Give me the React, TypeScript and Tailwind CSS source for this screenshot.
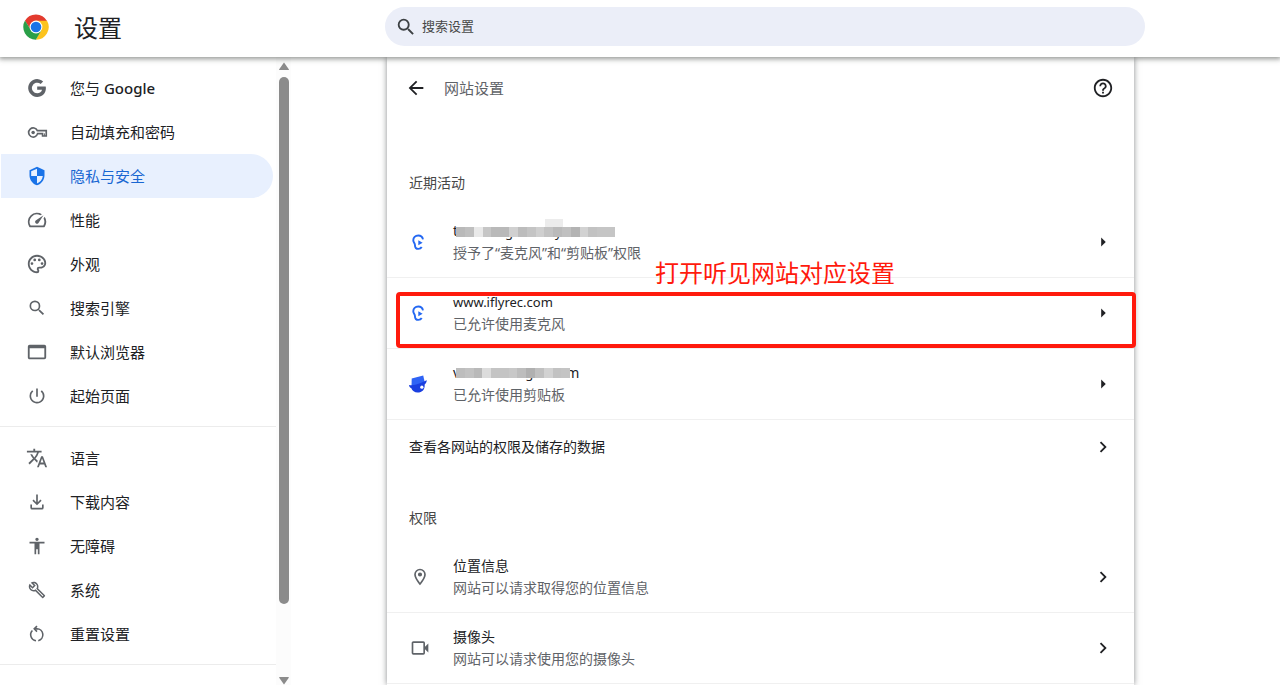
import type { ReactNode } from "react";
import {
    MdArrowBack,
    MdArrowRight,
    MdChevronRight,
    MdHelpOutline,
    MdSearch,
    MdAccessibility,
} from "react-icons/md";

type IconProps = { className?: string };

function Glyph({ d, className, viewBox = "0 0 24 24" }: IconProps & { d: string; viewBox?: string }) {
    return (
        <svg viewBox={viewBox} className={className ?? "h-5 w-5"} fill="currentColor" aria-hidden="true">
            <path fillRule="evenodd" d={d} />
        </svg>
    );
}

function ChromeLogo() {
    return (
        <svg viewBox="0 0 48 48" className="h-[26px] w-[26px]" aria-hidden="true">
            <circle cx="24" cy="24" r="23" fill="#fff" />
            <path fill="#e33b2e" d="M24 13h20.3A23.5 23.5 0 0 0 3.6 12.3L14.5 29.5 24 13z" />
            <path fill="#fcc31e" d="M33.5 29.5L23.6 47.5A23.5 23.5 0 0 0 44.4 12.5H24l9.5 17z" />
            <path fill="#2a9f48" d="M14.5 29.5L3.7 12.1a23.5 23.5 0 0 0 20 35.4L34 29.8 24 35z" />
            <circle cx="24" cy="24" r="11.8" fill="#fff" />
            <circle cx="24" cy="24" r="9.8" fill="#1a73e8" />
        </svg>
    );
}

function KeyIcon() {
    return (
        <svg viewBox="0 0 24 24" className="h-[21px] w-[21px]" fill="none" stroke="currentColor" strokeWidth="1.900" aria-hidden="true">
            <path d="M11.800 9.800H22V16h-4.200v-2.700h-5.700A5.200 5.200 0 1 1 11.800 9.800z" />
            <circle cx="7" cy="12" r="2" fill="currentColor" stroke="none" />
            <path d="M20 13v3" strokeWidth="1" />
        </svg>
    );
}

function ResetIcon() {
    return (
        <svg viewBox="0 0 24 24" className="h-5 w-5" fill="none" stroke="currentColor" strokeWidth="1.900" aria-hidden="true">
            <path d="M10.800 20A7.200 7.200 0 0 1 6.500 7.800" />
            <path d="M13.500 20a7.200 7.200 0 0 0-1.500-14.200H9.500" />
            <path d="M12 2.500L8.700 5.800 12 9.100" />
        </svg>
    );
}

function EarIcon() {
    return (
        <svg viewBox="0 0 16 16" className="h-[18px] w-[18px]" fill="none" stroke="#2468f2" strokeWidth="1.700" aria-hidden="true">
            <path d="M12.400 5.600C12 3.400 10.400 2.200 8.200 2.200 5.500 2.200 3.800 4.100 3.800 6.400c0 2 1.500 2.500 1.500 4.400 0 2 1.200 3.300 3 3.300 1.400 0 2.400-.6 3-1.700" />
            <path d="M8.300 6.500l3.800 2.100-3.800 2.200z" fill="#2468f2" stroke="none" />
        </svg>
    );
}

function HatIcon() {
    return (
        <svg viewBox="0 0 20 20" className="h-[18px] w-[18px]" aria-hidden="true">
            <path fill="#2f63f5" d="M3 4L15.800.5l2 9L2.800 13z" />
            <path fill="#1a3fe0" d="M0 11c3 1 9-.1 13-2 2.500-1.100 5-3 6.800-3.200-.1 2-1.200 3.600-2.400 4.700.5 5.500-2.700 9-7.900 9-3.200 0-6-1.900-6.900-4.700C1.200 13.800 0 12.600 0 11z" />
            <circle cx="14.300" cy="13.600" r="1.800" fill="#fff" />
        </svg>
    );
}

const icons = {
    google: "M12.2 10.300v3.600h5.300c-.5 2.300-2.500 3.900-5.300 3.900a5.800 5.800 0 1 1 3.800-10.200l2.700-2.700A9.700 9.700 0 1 0 12.200 21.700c5.600 0 9.500-3.900 9.500-9.500 0-.7-.1-1.300-.2-1.900z",
    shield: "M12 1L3 5v6c0 5.550 3.840 10.740 9 12 5.160-1.260 9-6.450 9-12V5l-9-4zm0 10.990h7c-.53 4.120-3.280 7.790-7 8.940V12H5V6.300l7-3.110v8.800z",
    speed: "M20.380 8.570l-1.230 1.850a8 8 0 0 1-.22 7.580H5.070A8 8 0 0 1 15.580 6.850l1.850-1.230A10 10 0 0 0 3.350 19a2 2 0 0 0 1.720 1h13.850a2 2 0 0 0 1.740-1 10 10 0 0 0-.27-10.440zm-9.790 6.840a2 2 0 0 0 2.830 0l5.660-8.490-8.490 5.660a2 2 0 0 0 0 2.830z",
    palette: "M12 2C6.490 2 2 6.490 2 12s4.490 10 10 10a2.500 2.500 0 0 0 2.500-2.500c0-.61-.23-1.200-.64-1.670a.528.528 0 0 1-.13-.33c0-.28.22-.5.500-.5H16c3.310 0 6-2.690 6-6 0-4.960-4.490-9-10-9zm4 13h-1.770a2.500 2.500 0 0 0-2.500 2.500c0 .6.220 1.190.63 1.650.06.07.14.19.14.350 0 .28-.22.500-.500.500-4.410 0-8-3.590-8-8s3.590-8 8-8 8 3.140 8 7c0 2.210-1.790 4-4 4zM6.500 10a1.500 1.500 0 1 0 0 3 1.500 1.500 0 0 0 0-3zM9.500 6a1.500 1.500 0 1 0 0 3 1.500 1.500 0 0 0 0-3zM14.500 6a1.500 1.500 0 1 0 0 3 1.500 1.500 0 0 0 0-3zM17.500 10a1.500 1.500 0 1 0 0 3 1.500 1.500 0 0 0 0-3z",
    search: "M15.500 14h-.79l-.28-.27A6.470 6.470 0 0 0 16 9.500 6.500 6.500 0 1 0 9.500 16c1.610 0 3.090-.59 4.230-1.570l.27.28v.79l5 4.990L20.490 19l-4.990-5zm-6 0a4.500 4.500 0 1 1 0-9 4.500 4.500 0 0 1 0 9z",
    browser: "M20 4H4a2 2 0 0 0-2 2v12c0 1.100.9 2 2 2h16a2 2 0 0 0 2-2V6a2 2 0 0 0-2-2zm0 14H4V8h16z",
    power: "M13 3h-2v10h2V3zm4.830 2.170l-1.420 1.420A6.920 6.920 0 0 1 19 12a7 7 0 1 1-11.420-5.420L6.170 5.170A8.932 8.932 0 0 0 3 12a9 9 0 1 0 14.830-6.830z",
    translate: "M12.870 15.070l-2.540-2.510.03-.03A17.520 17.520 0 0 0 14.070 6H17V4h-7V2H8v2H1v1.990h11.170C11.500 7.920 10.440 9.750 9 11.350 8.070 10.320 7.300 9.190 6.690 8h-2c.73 1.630 1.730 3.170 2.980 4.560l-5.090 5.020L4 19l5-5 3.110 3.110.76-2.040zM18.500 10h-2L12 22h2l1.120-3h4.750L21 22h2l-4.500-12zm-2.620 7l1.620-4.330L19.120 17h-3.240z",
    download: "M11 3h2v9.200l3.100-3.100 1.400 1.400L12 16l-5.500-5.500 1.400-1.400 3.100 3.100zM4 15h2v4h12v-4h2v4a2 2 0 0 1-2 2H6a2 2 0 0 1-2-2z",
    wrench: "M22.610 18.990l-9.080-9.080c.93-2.340.45-5.100-1.440-7C9.790.610 6.210.4 3.660 2.260L7.500 6.110 6.080 7.520 2.250 3.690C.390 6.230.600 9.820 2.900 12.110c1.860 1.860 4.570 2.350 6.890 1.480l9.110 9.110c.39.39 1.020.39 1.410 0l2.300-2.300c.4-.38.4-1.010 0-1.410zm-3 1.600l-9.460-9.460c-.61.45-1.290.72-2 .82-1.360.2-2.790-.21-3.830-1.250C3.370 9.760 2.930 8.500 3 7.260l3.090 3.090 4.240-4.240-3.090-3.090c1.240-.07 2.490.37 3.440 1.310a4.469 4.469 0 0 1 1.240 3.960 4.350 4.350 0 0 1-.88 1.960l9.450 9.450-.88.890z",
    place: "M12 2a7 7 0 0 0-7 7c0 5.250 7 13 7 13s7-7.750 7-13a7 7 0 0 0-7-7zM7 9a5 5 0 0 1 10 0c0 2.880-2.880 7.190-5 9.880C9.920 16.210 7 11.850 7 9zM12 6.500a2.500 2.500 0 1 0 0 5 2.500 2.500 0 0 0 0-5z",
    camera: "M4 4h12a2 2 0 0 1 2 2v4.500l4-4v11l-4-4V18a2 2 0 0 1-2 2H4a2 2 0 0 1-2-2V6c0-1.100.9-2 2-2zm0 2v12h12V6z",
};

type NavItem = { label: ReactNode; icon: ReactNode; active?: boolean };

const large = "h-[22px] w-[22px]";

const primary: NavItem[] = [
    { label: <>您与 <span className="font-medium">Google</span></>, icon: <Glyph d={icons.google} className={large} /> },
    { label: "自动填充和密码", icon: <KeyIcon /> },
    { label: "隐私与安全", icon: <Glyph d={icons.shield} />, active: true },
    { label: "性能", icon: <Glyph d={icons.speed} className={large} /> },
    { label: "外观", icon: <Glyph d={icons.palette} className={large} /> },
    { label: "搜索引擎", icon: <Glyph d={icons.search} /> },
    { label: "默认浏览器", icon: <Glyph d={icons.browser} className={large} /> },
    { label: "起始页面", icon: <Glyph d={icons.power} /> },
];

const secondary: NavItem[] = [
    { label: "语言", icon: <Glyph d={icons.translate} className={large} /> },
    { label: "下载内容", icon: <Glyph d={icons.download} /> },
    { label: "无障碍", icon: <MdAccessibility className="h-5 w-5" /> },
    { label: "系统", icon: <Glyph d={icons.wrench} className="h-[18px] w-[18px]" /> },
    { label: "重置设置", icon: <ResetIcon /> },
];

function NavList({ items }: { items: NavItem[] }) {
    return (
        <ul>
            {items.map((item, i) => (
                <li key={i}>
                    <a
                        href="#"
                        className={
                            item.active
                                ? "ml-px mr-[3px] flex h-11 items-center rounded-r-full bg-[#e8f0fe] pl-[25px] text-[#1967d2]"
                                : "ml-px mr-[3px] flex h-11 items-center rounded-r-full pl-[25px] text-[#202124]"
                        }
                    >
                        <span className={item.active ? "flex w-[22px] justify-center text-[#1a73e8]" : "flex w-[22px] justify-center text-[#5f6368]"}>
                            {item.icon}
                        </span>
                        <span className="ml-[22px] pt-0.5 text-[15px]">{item.label}</span>
                    </a>
                </li>
            ))}
        </ul>
    );
}

function Row({ icon, title, sub, arrow, bordered }: { icon: ReactNode; title: ReactNode; sub: string; arrow: ReactNode; bordered?: boolean }) {
    return (
        <button
            className={
                bordered
                    ? "flex h-[71px] w-full items-center border-t border-[#f0f0f0] pl-[22px] pr-5 text-left"
                    : "flex h-[71px] w-full items-center pl-[22px] pr-5 text-left"
            }
        >
            <span className="flex w-11 text-[#5f6368]">{icon}</span>
            <span className="flex-1 leading-[22px]">
                <span className="flex h-[22px] items-center text-[#202124]">{title}</span>
                <span className="block text-[#5f6368]">{sub}</span>
            </span>
            {arrow}
        </button>
    );
}

const firstMask = ["bg-[#b9b9b9]", "bg-[#bfbfbf]", "bg-[#e9e9e9]", "bg-[#c6c6c6]", "bg-[#b9b9b9]", "bg-[#b9b9b9]", "bg-[#d0d0d0]", "bg-[#bcbcbc]", "bg-[#c4c4c4]", "bg-[#cfcfcf]", "bg-[#c3c3c3]", "bg-[#bababa]", "bg-[#c0c0c0]", "bg-[#b3b3b3]", "bg-[#d2d2d2]", "bg-[#c2c2c2]", "bg-[#c5c5c5]", "bg-[#c5c5c5]"];
const secondMask = ["bg-[#bdbdbd]", "bg-[#c2c2c2]", "bg-[#b9b9b9]", "bg-[#dcdcdc]", "bg-[#c4c4c4]", "bg-[#c4c4c4]", "bg-[#c8c8c8]", "bg-[#bdbdbd]", "bg-[#b0b0b0]", "bg-[#c0c0c0]", "bg-[#d2d2d2]", "bg-[#c2c2c2]", "bg-[#c4c4c4]"];

function Mask({ cells, className, children }: { cells: string[]; className: string; children?: ReactNode }) {
    return (
        <span className={"relative flex " + className}>
            {children}
            {cells.map((c, i) => (
                <span key={i} className={"relative h-[10px] flex-1 " + c} />
            ))}
        </span>
    );
}

export default function App() {
    const triangle = <MdArrowRight className="h-[22px] w-[22px] text-[#202124]" />;
    const chevron = <MdChevronRight className="h-[22px] w-[22px] text-[#202124]" />;

    return (
        <div className="flex h-screen flex-col overflow-hidden bg-white font-['Noto_Sans','Noto_Sans_CJK_SC',sans-serif] text-sm text-[#202124]">
            <header className="z-10 flex h-[57px] shrink-0 bg-white pr-[135px] shadow-[0_1px_5px_1px_rgba(60,64,60,0.55)]">
                <div className="flex w-[385px] items-center pb-1 pl-[23px]">
                    <ChromeLogo />
                    <h1 className="ml-[25px] pt-0.5 text-2xl">设置</h1>
                </div>
                <label className="mt-[7px] flex h-[39px] flex-1 items-center rounded-full bg-[#ebeef8] pl-[10px]">
                    <MdSearch className="h-[22px] w-[22px] text-[#3c4043]" />
                    <input
                        type="search"
                        placeholder="搜索设置"
                        aria-label="搜索设置"
                        className="ml-[5px] flex-1 bg-transparent text-[13px] outline-none placeholder:text-[#474747]"
                    />
                </label>
            </header>

            <div className="flex min-h-0 flex-1">
                <nav className="w-[276px] shrink-0 overflow-hidden pt-[9px]">
                    <NavList items={primary} />
                    <hr className="mb-[9px] mt-2 border-[#ececec]" />
                    <NavList items={secondary} />
                    <hr className="mt-2 border-[#ececec]" />
                </nav>
                <div className="flex w-[15px] shrink-0 flex-col items-center bg-[#fcfcfc] pt-[5px]">
                    <Glyph d="M5 0.500L10 7.500Q10 8 9 8H1Q0 8 0 7.500z" viewBox="0 0 10 8" className="h-2 w-[10px] shrink-0 text-[#8b8b8b]" />
                    <div className="mt-[7px] w-[10px] flex-[36] rounded-full bg-[#8b8b8b]" />
                    <div className="flex-[5]" />
                    <Glyph d="M5 7.500L10 0.500Q10 0 9 0H1Q0 0 0 0.500z" viewBox="0 0 10 8" className="h-2 w-[10px] shrink-0 text-[#8b8b8b]" />
                </div>

                <main className="min-w-0 flex-1 pl-24 pr-[146px]">
                    <div className="h-full bg-white shadow-[0_0_6px_rgba(60,64,67,0.6)]">
                        <div className="flex h-[53px] items-center pl-[18px] pr-5 pt-[9px]">
                            <button aria-label="返回">
                                <MdArrowBack className="h-[22px] w-[22px]" />
                            </button>
                            <h2 className="ml-[17px] flex-1 pt-0.5 text-[15px] text-[#5f6368]">网站设置</h2>
                            <button aria-label="帮助">
                                <MdHelpOutline className="h-[22px] w-[22px]" />
                            </button>
                        </div>

                        <h3 className="pb-3 pl-[22px] pt-[62px] leading-[22px] text-[#474747]">近期活动</h3>
                        <Row
                            icon={<EarIcon />}
                            title={
                                <>
                                    t
                                    <Mask cells={firstMask} className="-ml-0.5 w-[159px] pt-0.5">
                                        <span className="absolute -top-1 left-[49px] text-[13px]">g</span>
                                        <span className="absolute -top-1 left-[99px] text-[13px]">y</span>
                                        <span className="absolute -top-1.5 left-[89px] h-2 w-[18px] bg-[#ececec]" />
                                    </Mask>
                                </>
                            }
                            sub="授予了“麦克风”和“剪贴板”权限"
                            arrow={triangle}
                        />
                        <div className="relative">
                            <Row icon={<EarIcon />} title={<span className="text-[13px]">www.iflyrec.com</span>} sub="已允许使用麦克风" arrow={triangle} bordered />
                            <div className="pointer-events-none absolute -right-0.5 bottom-0 left-[9px] top-[15px] rounded-sm border-4 border-[#ff1a0d]" />
                            <p className="absolute -top-5 left-[268px] text-2xl leading-8 text-[#ff1a0d]">打开听见网站对应设置</p>
                        </div>
                        <Row
                            icon={<HatIcon />}
                            title={
                                <>
                                    v
                                    <Mask cells={secondMask} className="-ml-1 w-[114px]">
                                        <span className="absolute -top-1.5 left-[69px] text-[13px]">g</span>
                                    </Mask>
                                    <span className="-ml-1">m</span>
                                </>
                            }
                            sub="已允许使用剪贴板"
                            arrow={triangle}
                            bordered
                        />
                        <button className="flex h-[54px] w-full items-center justify-between border-t border-[#f0f0f0] pl-[22px] pr-5 text-left">
                            查看各网站的权限及储存的数据
                            {chevron}
                        </button>

                        <h3 className="pb-3 pl-[22px] pt-[34px] leading-[22px] text-[#474747]">权限</h3>
                        <Row icon={<Glyph d={icons.place} className="ml-px h-5 w-5" />} title="位置信息" sub="网站可以请求取得您的位置信息" arrow={chevron} />
                        <Row icon={<Glyph d={icons.camera} className="ml-px h-5 w-5" />} title="摄像头" sub="网站可以请求使用您的摄像头" arrow={chevron} bordered />
                        <hr className="border-[#f0f0f0]" />
                    </div>
                </main>
            </div>
        </div>
    );
}
